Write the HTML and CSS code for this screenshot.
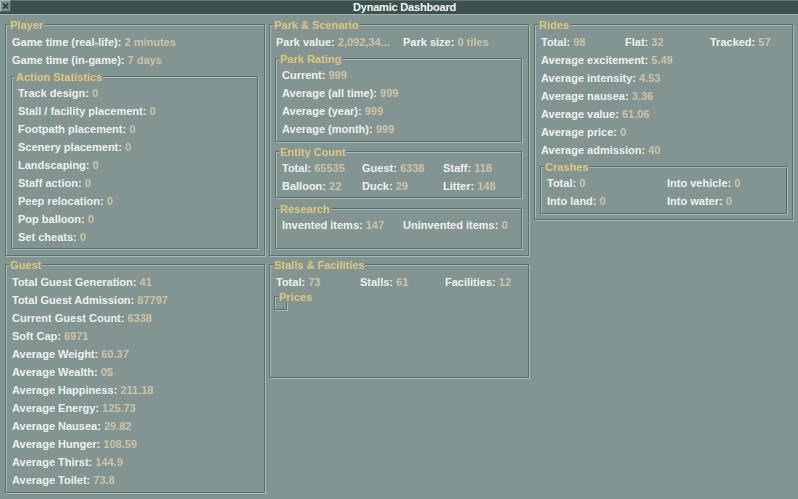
FILE: index.html
```html
<!DOCTYPE html>
<html>
<head>
<meta charset="utf-8">
<link rel="stylesheet" href="styles.css">
</head>
<body>
<div class="window">
  <div class="titlebar">
    <div class="close"><svg width="9" height="10" viewBox="0 0 9 10"><path d="M2 2.5 L7 7.5 M7 2.5 L2 7.5" stroke="#24332f" stroke-width="1.6" fill="none"/></svg></div>
    <div class="title">Dynamic Dashboard</div>
  </div>
  <div class="content">
    <div class="col col1">
      <section class="group player">
        <span class="gtitle">Player</span>
        <div class="row">Game time (real-life): <span class="v">2 minutes</span></div>
        <div class="row">Game time (in-game): <span class="v">7 days</span></div>
        <section class="group inner action">
          <span class="gtitle">Action Statistics</span>
          <div class="row">Track design: <span class="v">0</span></div>
          <div class="row">Stall / facility placement: <span class="v">0</span></div>
          <div class="row">Footpath placement: <span class="v">0</span></div>
          <div class="row">Scenery placement: <span class="v">0</span></div>
          <div class="row">Landscaping: <span class="v">0</span></div>
          <div class="row">Staff action: <span class="v">0</span></div>
          <div class="row">Peep relocation: <span class="v">0</span></div>
          <div class="row">Pop balloon: <span class="v">0</span></div>
          <div class="row">Set cheats: <span class="v">0</span></div>
        </section>
      </section>
      <section class="group guest">
        <span class="gtitle">Guest</span>
        <div class="row">Total Guest Generation: <span class="v">41</span></div>
        <div class="row">Total Guest Admission: <span class="v">87797</span></div>
        <div class="row">Current Guest Count: <span class="v">6338</span></div>
        <div class="row">Soft Cap: <span class="v">6971</span></div>
        <div class="row">Average Weight: <span class="v">60.37</span></div>
        <div class="row">Average Wealth: <span class="v">0$</span></div>
        <div class="row">Average Happiness: <span class="v">211.18</span></div>
        <div class="row">Average Energy: <span class="v">125.73</span></div>
        <div class="row">Average Nausea: <span class="v">29.82</span></div>
        <div class="row">Average Hunger: <span class="v">108.59</span></div>
        <div class="row">Average Thirst: <span class="v">144.9</span></div>
        <div class="row">Average Toilet: <span class="v">73.8</span></div>
      </section>
    </div>

    <div class="col col2">
      <section class="group park">
        <span class="gtitle">Park &amp; Scenario</span>
        <div class="grid g-park">
          <div class="row">Park value: <span class="v">2,092,34...</span></div>
          <div class="row">Park size: <span class="v">0 tiles</span></div>
        </div>
        <section class="group inner rating">
          <span class="gtitle">Park Rating</span>
          <div class="row">Current: <span class="v">999</span></div>
          <div class="row">Average (all time): <span class="v">999</span></div>
          <div class="row">Average (year): <span class="v">999</span></div>
          <div class="row">Average (month): <span class="v">999</span></div>
        </section>
        <section class="group inner entity">
          <span class="gtitle">Entity Count</span>
          <div class="grid g-entity">
            <div class="row">Total: <span class="v">65535</span></div>
            <div class="row">Guest: <span class="v">6338</span></div>
            <div class="row">Staff: <span class="v">118</span></div>
            <div class="row">Balloon: <span class="v">22</span></div>
            <div class="row">Duck: <span class="v">29</span></div>
            <div class="row">Litter: <span class="v">148</span></div>
          </div>
        </section>
        <section class="group inner research">
          <span class="gtitle">Research</span>
          <div class="grid g-research">
            <div class="row">Invented items: <span class="v">147</span></div>
            <div class="row">Uninvented items: <span class="v">0</span></div>
          </div>
        </section>
      </section>
      <section class="group stalls">
        <span class="gtitle">Stalls &amp; Facilities</span>
        <div class="grid g-three">
          <div class="row">Total: <span class="v">73</span></div>
          <div class="row">Stalls: <span class="v">61</span></div>
          <div class="row">Facilities: <span class="v">12</span></div>
        </div>
        <section class="group prices">
          <span class="gtitle">Prices</span>
        </section>
      </section>
    </div>

    <div class="col col3">
      <section class="group rides">
        <span class="gtitle">Rides</span>
        <div class="grid g-three">
          <div class="row">Total: <span class="v">98</span></div>
          <div class="row">Flat: <span class="v">32</span></div>
          <div class="row">Tracked: <span class="v">57</span></div>
        </div>
        <div class="row">Average excitement: <span class="v">5.49</span></div>
        <div class="row">Average intensity: <span class="v">4.53</span></div>
        <div class="row">Average nausea: <span class="v">3.36</span></div>
        <div class="row">Average value: <span class="v">61.06</span></div>
        <div class="row">Average price: <span class="v">0</span></div>
        <div class="row">Average admission: <span class="v">40</span></div>
        <section class="group inner crashes">
          <span class="gtitle">Crashes</span>
          <div class="grid g-crash">
            <div class="row">Total: <span class="v">0</span></div>
            <div class="row">Into vehicle: <span class="v">0</span></div>
            <div class="row">Into land: <span class="v">0</span></div>
            <div class="row">Into water: <span class="v">0</span></div>
          </div>
        </section>
      </section>
    </div>
  </div>
</div>
</body>
</html>
```

FILE: styles.css
```css
html, body {
  margin: 0;
  padding: 0;
  background: #839592;
  overflow: hidden;
}

.window {
  width: 798px;
  height: 499px;
  background: #839592;
  font-family: "Liberation Sans", Arial, sans-serif;
  font-weight: 700;
  font-size: 11px;
  color: #eef0ec;
}

.titlebar {
  display: flex;
  height: 13px;
  border-top: 1px solid #60756f;
  border-bottom: 1px solid #9fafac;
  background: #3b534f;
}

.close {
  width: 9px;
  height: 10px;
  margin-top: -1px;
  background: #7a8d8a;
  border-top: 1px solid #a9b8b5;
  border-left: 1px solid #a9b8b5;
  border-right: 1px solid #4c5f5b;
  border-bottom: 1px solid #4c5f5b;
  display: flex;
  align-items: center;
  justify-content: center;
}

.close svg {
  display: block;
}

.title {
  flex: 1;
  text-align: center;
  line-height: 13px;
  color: #f6f6f4;
  letter-spacing: -0.2px;
}

.content {
  display: flex;
  align-items: flex-start;
  padding-top: 9px;
}

.col {
  display: flex;
  flex-direction: column;
  width: 260px;
}

.col1 { margin-left: 5px; }
.col2 { margin-left: 4px; }
.col3 { margin-left: 5px; width: 259px; }

.group {
  position: relative;
  box-sizing: border-box;
  border: 1px solid #5b716e;
  box-shadow: 1px 1px 0 #a9b8b5, inset 1px 1px 0 #a9b8b5;
  padding: 8px 5px 0 6px;
}

.group.inner {
  padding-top: 7px;
  width: 247px;
  margin-left: -1px;
}

.gtitle {
  position: absolute;
  top: -5px;
  left: 3px;
  padding: 0 1px;
  line-height: 11px;
  background: #839592;
  color: #dfc57b;
  white-space: nowrap;
}

.row {
  height: 18px;
  line-height: 18px;
  white-space: nowrap;
}

.v {
  color: #cdc2a4;
}

.grid {
  display: grid;
}

.g-park { grid-template-columns: 127px 1fr; }
.g-three { grid-template-columns: 84px 85px 1fr; }
.g-entity { grid-template-columns: 80px 81px 1fr; }
.g-research { grid-template-columns: 121px 1fr; }
.g-crash { grid-template-columns: 120px 1fr; }

.player { height: 232px; }
.action { height: 173px; margin-top: 7px; }

.guest { height: 229px; margin-top: 8px; }

.park { height: 232px; }
.rating { height: 84px; margin-top: 7px; }
.entity { height: 47px; margin-top: 9px; }
.research { height: 41px; margin-top: 10px; }

.stalls { height: 114px; margin-top: 8px; }
.prices {
  width: 13px;
  height: 14px;
  margin-top: 5px;
  margin-left: -2px;
  padding: 0;
}

.rides { height: 196px; }
.crashes { height: 48px; margin-top: 7px; width: 248px; }
```
